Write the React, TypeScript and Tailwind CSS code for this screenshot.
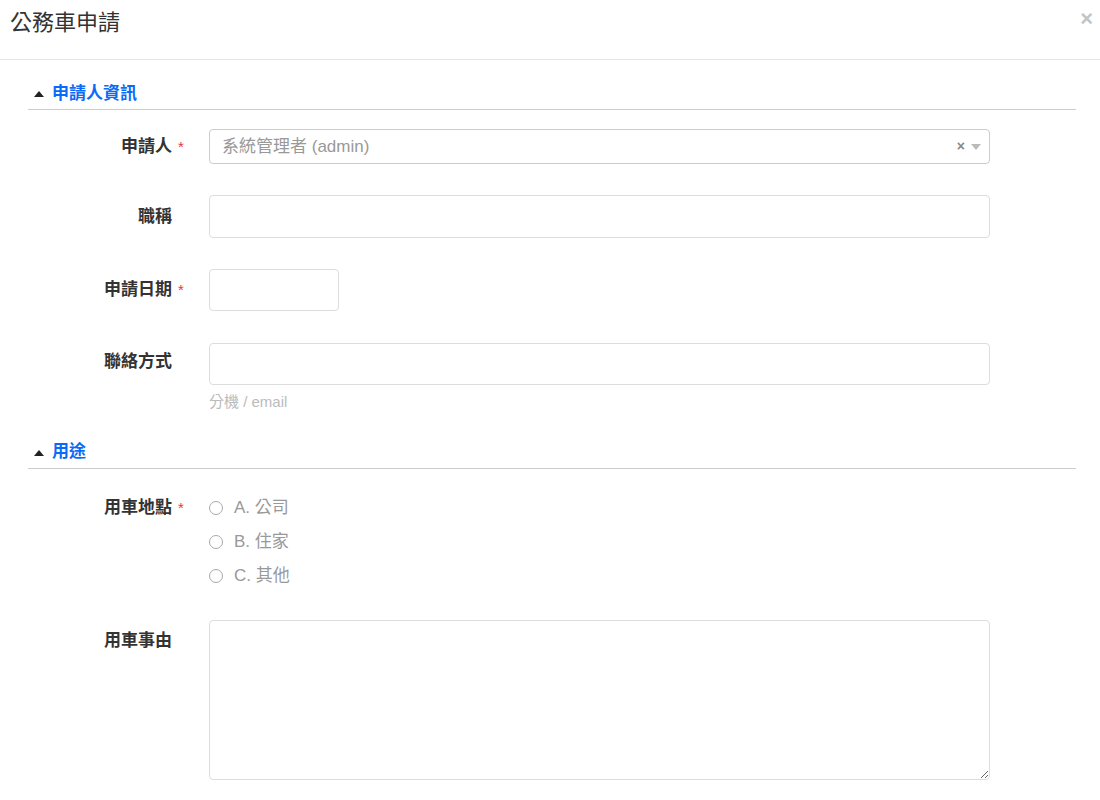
// Company car request form dialog

const FONT = '"Liberation Sans", "Noto Sans CJK TC", sans-serif';

function Label({ text, required, className = '' }: { text: string; required?: boolean; className?: string }) {
  return (
    <div className={`w-[181px] shrink-0 flex justify-end pr-[37px] ${className}`}>
      <span className="relative text-[17px] font-bold text-[#333] leading-[22px]">
        {text}
        {required && (
          <span className="absolute left-full ml-[6px] top-0 text-[#e33] text-[15px] font-normal">*</span>
        )}
      </span>
    </div>
  );
}

function Section({ title }: { title: string }) {
  return (
    <div className="flex items-center h-[40px] pt-[8px] border-b border-[#ccc] pl-[6px]">
      <svg width="10" height="6" viewBox="0 0 10 6" className="mr-[8px] mt-[1px]">
        <path d="M0 6 L5 0 L10 6 Z" fill="#222" />
      </svg>
      <span className="text-[17px] font-bold text-[#0a6cf6]">{title}</span>
    </div>
  );
}

function Radio({ text }: { text: string }) {
  return (
    <label className="flex items-center h-[34px] text-[17px] text-[#999]">
      <span className="w-[14px] h-[14px] rounded-full border border-[#aaa] mr-[11px]" />
      {text}
    </label>
  );
}

export default function App() {
  return (
    <div className="w-[1100px] h-[800px] bg-white overflow-hidden" style={{ fontFamily: FONT }}>
      {/* Header */}
      <div className="relative h-[60px] border-b border-[#e5e5e5] pl-[10px] flex items-start pt-[6px]">
        <h1 className="text-[22px] text-[#333] font-normal">公務車申請</h1>
        <span className="absolute right-[7px] top-[2px] text-[#c4c4c4] text-[22px] font-bold">×</span>
      </div>

      <div className="pl-[28px] pr-[24px] pt-[10px]">
        <Section title="申請人資訊" />

        {/* 申請人 */}
        <div className="flex items-center mt-[19px]">
          <Label text="申請人" required />
          <div className="w-[781px] h-[35px] border border-[#ccc] rounded-[4px] flex items-center pl-[12px] pr-[8px]">
            <span className="flex-1 text-[17px] text-[#999]">系統管理者 (admin)</span>
            <span className="text-[#888] text-[14px] font-bold mr-[6px]">×</span>
            <svg width="10" height="6" viewBox="0 0 10 6">
              <path d="M0 0 L10 0 L5 6 Z" fill="#bbb" />
            </svg>
          </div>
        </div>

        {/* 職稱 */}
        <div className="flex items-center mt-[31px]">
          <Label text="職稱" />
          <div className="w-[781px] h-[43px] border border-[#ddd] rounded-[4px]" />
        </div>

        {/* 申請日期 */}
        <div className="flex items-center mt-[31px]">
          <Label text="申請日期" required />
          <div className="w-[130px] h-[42px] border border-[#ddd] rounded-[4px]" />
        </div>

        {/* 聯絡方式 */}
        <div className="flex mt-[32px]">
          <Label text="聯絡方式" className="pt-[8px]" />
          <div>
            <div className="w-[781px] h-[42px] border border-[#ddd] rounded-[4px]" />
            <div className="text-[15px] text-[#bbb] mt-[6px]">分機 / email</div>
          </div>
        </div>

        <div className="mt-[15px]">
          <Section title="用途" />
        </div>

        {/* 用車地點 */}
        <div className="flex mt-[22px]">
          <Label text="用車地點" required className="pt-[6px]" />
          <div className="flex flex-col">
            <Radio text="A. 公司" />
            <Radio text="B. 住家" />
            <Radio text="C. 其他" />
          </div>
        </div>

        {/* 用車事由 */}
        <div className="flex mt-[27px]">
          <Label text="用車事由" className="pt-[10px]" />
          <textarea className="w-[781px] h-[160px] border border-[#ddd] rounded-[4px] outline-none" />
        </div>
      </div>
    </div>
  );
}
